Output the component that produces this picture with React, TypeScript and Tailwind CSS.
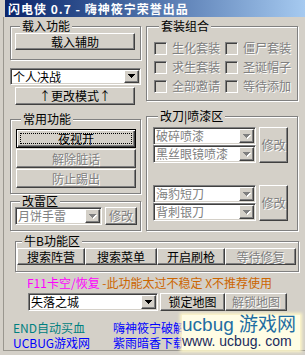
import React from "react";

const dim = "text-[#808080] [text-shadow:1px_1px_0_#fff]";
const raised =
  "border border-t-white border-l-white border-r-[#404040] border-b-[#404040] shadow-[inset_-1px_-1px_0_#808080]";
const sunken =
  "border border-t-[#808080] border-l-[#808080] border-r-white border-b-white shadow-[inset_1px_1px_0_#404040,inset_-1px_-1px_0_#d4d0c8]";

function Btn({ label, disabled, className = "" }: { label: string; disabled?: boolean; className?: string }) {
  return (
    <button
      className={`flex items-center justify-center bg-[#d4d0c8] text-[12px] leading-[12px] whitespace-nowrap ${raised} ${
        disabled ? dim : "text-black"
      } ${className}`}
    >
      {label}
    </button>
  );
}

function FocusBtn({ label, className = "" }: { label: string; className?: string }) {
  return (
    <button
      className={`flex p-[3px] bg-[#d4d0c8] border border-black shadow-[inset_1px_1px_0_#fff,inset_-1px_-1px_0_#404040,inset_-2px_-2px_0_#808080] ${className}`}
    >
      <span className="flex-1 flex items-center justify-center border border-dotted border-black text-[12px] leading-[12px] text-black">
        {label}
      </span>
    </button>
  );
}

function Arrow({ disabled }: { disabled?: boolean }) {
  const d = "M0 0h7v1H0z M1 1h5v1H1z M2 2h3v1H2z M3 3h1v1H3z";
  return (
    <svg width="8" height="5" viewBox="0 0 8 5">
      {disabled && <path d={d} fill="#fff" transform="translate(1 1)" />}
      <path d={d} fill={disabled ? "#808080" : "#000"} />
    </svg>
  );
}

function Combo({ text, disabled, className = "" }: { text: string; disabled?: boolean; className?: string }) {
  return (
    <div className={`flex bg-white ${sunken} ${className}`}>
      <span
        className={`flex-1 flex items-center pl-[2px] text-[12px] leading-[12px] whitespace-nowrap ${
          disabled ? "text-[#808080]" : "text-black"
        }`}
      >
        {text}
      </span>
      <span className={`m-[1px] w-[15px] flex items-center justify-center bg-[#d4d0c8] ${raised}`}>
        <Arrow disabled={disabled} />
      </span>
    </div>
  );
}

function Check({ label }: { label: string }) {
  return (
    <div className="flex items-center gap-[5px]">
      <span className={`w-[13px] h-[13px] bg-[#d4d0c8] ${sunken}`} />
      <span className={`text-[12px] leading-[12px] whitespace-nowrap ${dim}`}>{label}</span>
    </div>
  );
}

function Group({ title, className = "", children }: { title: string; className?: string; children?: React.ReactNode }) {
  return (
    <fieldset className={`border border-[#808080] shadow-[inset_1px_1px_0_#fff,1px_1px_0_#fff] ${className}`}>
      <legend className="ml-[5px] px-[2px] bg-[#d4d0c8] text-[12px] leading-[12px] text-black">{title}</legend>
      {children}
    </fieldset>
  );
}

export default function App() {
  return (
    <div className="relative w-[305px] h-[355px] overflow-hidden bg-[#d4d0c8] text-black [font-family:'Noto_Sans_CJK_SC','Noto_Sans',sans-serif]">
      {/* title bar */}
      <div className="ml-[5px] h-[17px] pl-[3px] bg-linear-to-r from-[#0a246a] to-[#a6caf0] text-white font-bold text-[12px] leading-[17px] tracking-[1px] whitespace-nowrap">
        闪电侠 0.7 - 嗨神筱宁荣誉出品
      </div>

      <div className="ml-[3px] h-[334px] pl-[6px] pt-[3px] border-l border-b border-[#9a978f]">
        <div className="flex gap-[5px]">
          {/* left column */}
          <div className="w-[131px] flex flex-col">
            <Group title="载入功能" className="h-[40px] pl-[4px] pt-[1px]">
              <Btn label="载入辅助" className="w-[120px] h-[17px]" />
            </Group>
            <Combo text="个人决战" className="mt-[8px] h-[17px]" />
            <Btn label="↑更改模式↑" className="ml-[5px] mt-[2px] w-[120px] h-[18px]" />
            <Group title="常用功能" className="mt-[8px] h-[81px] pl-[5px] pt-[4px]">
              <div className="flex flex-col gap-[1px] w-[120px]">
                <FocusBtn label="夜视开" className="h-[19px]" />
                <Btn label="解除脏话" disabled className="h-[19px]" />
                <Btn label="防止踢出" disabled className="h-[19px]" />
              </div>
            </Group>
            <Group title="改雷区" className="mt-[1px] h-[36px] pl-[4px]">
              <div className="flex gap-[3px]">
                <Combo text="月饼手雷" disabled className="w-[87px] h-[18px]" />
                <Btn label="修改" disabled className="w-[32px] h-[18px]" />
              </div>
            </Group>
          </div>

          {/* right column */}
          <div className="w-[152px] flex flex-col">
            <Group title="套装组合" className="h-[81px] pl-[7px] pt-[7px]">
              <div className="grid grid-cols-[66px_66px] gap-x-[5px] gap-y-[1px] auto-rows-[18px] items-center">
                <Check label="生化套装" />
                <Check label="僵尸套装" />
                <Check label="求生套装" />
                <Check label="圣诞帽子" />
                <Check label="全部邀请" />
                <Check label="等待添加" />
              </div>
            </Group>
            <Group title="改刀|喷漆区" className="mt-[9px] h-[121px] pl-[6px] pt-[5px]">
              <div className="flex gap-[3px]">
                <div className="flex flex-col w-[103px]">
                  <Combo text="破碎喷漆" disabled className="h-[18px]" />
                  <Combo text="黑丝眼镜喷漆" disabled className="h-[18px]" />
                </div>
                <Btn label="修改" disabled className="w-[29px] h-[36px]" />
              </div>
              <div className="flex gap-[3px] mt-[22px]">
                <div className="flex flex-col w-[103px]">
                  <Combo text="海豹短刀" disabled className="h-[18px]" />
                  <Combo text="背刺银刀" disabled className="h-[18px]" />
                </div>
                <Btn label="修改" disabled className="w-[29px] h-[36px]" />
              </div>
            </Group>
          </div>
        </div>

        <Group title="牛B功能区" className="mt-[4px] ml-[5px] w-[284px] h-[37px] pl-[1px] pt-[1px]">
          <div className="grid grid-cols-[68px_72px_68px_71px] h-[17px]">
            <Btn label="搜索阵营" />
            <Btn label="搜索菜单" />
            <Btn label="开启刷枪" />
            <Btn label="等待修复" disabled />
          </div>
        </Group>

        <div className="mt-[5px] ml-[17px] text-[12px] leading-[12px] whitespace-nowrap">
          <span className="text-[#ff00ff]">F11卡空/恢复</span>
          <span className="text-[#cc6600]"> -此功能太过不稳定 X不推荐使用</span>
        </div>

        <div className="mt-[4px] ml-[18px] flex">
          <Combo text="失落之城" className="w-[130px] h-[18px]" />
          <Btn label="锁定地图" className="ml-[2px] w-[65px] h-[18px]" />
          <Btn label="解锁地图" disabled className="w-[62px] h-[18px]" />
        </div>

        <div className="mt-[11px] ml-[3px] grid grid-cols-[100px_auto] gap-y-[3px] text-[12px] leading-[12px] whitespace-nowrap">
          <span className="text-[#008080]">END自动买血</span>
          <span className="text-[#0000ff]">嗨神筱宁破解</span>
          <span className="text-[#0000ff]">UCBUG游戏网</span>
          <span className="text-[#0000ff]">紫雨暗香下载</span>
        </div>
      </div>

      {/* watermark */}
      <div className="absolute left-[182px] top-[315px] w-[118px] h-[35px] bg-[#fffde4] shadow-[0_0_3px_2px_#fff8c8] flex flex-col items-start">
        <div className="text-[19px] leading-[19px] text-[#1f6ea2] [font-family:'Liberation_Sans','Noto_Sans_CJK_SC',sans-serif] whitespace-nowrap">
          ucbug 游戏网
        </div>
        <div className="text-[14px] leading-[15px] font-medium text-[#1a2a5c] [font-family:'Liberation_Sans',sans-serif] whitespace-nowrap">
          www. ucbug. com
        </div>
      </div>
    </div>
  );
}
